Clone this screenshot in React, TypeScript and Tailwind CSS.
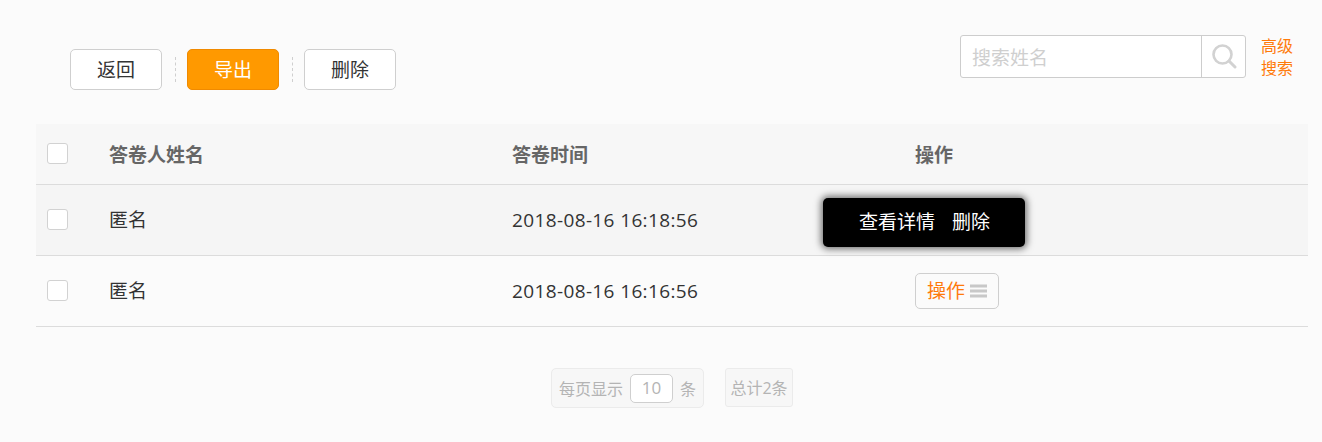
export default function App() {
  const Row = ({ time, open }: { time: string; open: boolean }) => (
    <div className={`flex h-[71px] items-center border-b border-[#dcdcdc] ${open ? "bg-[#f5f5f5]" : ""}`}>
      <span className="mb-[1px] ml-[11px] h-[21px] w-[21px] rounded-[3px] border border-[#d2d2d2] bg-white" />
      <span className="ml-[41px] w-[403px] pb-[1px] text-[19px] text-[#333]">匿名</span>
      <span className="w-[403px] font-['Open_Sans',sans-serif] text-[19px] tracking-[0.37px] text-[#333]">{time}</span>
      {open ? (
        <div className="relative h-full flex-1">
          <div className="absolute left-[-92px] top-[13px] flex h-[49px] w-[202px] items-center rounded-[5px] bg-black pb-[2px] pl-[36px] text-[19px] text-white shadow-[0_0_7px_2px_rgba(0,0,0,0.55)]">
            <span>查看详情</span>
            <span className="ml-[17px]">删除</span>
          </div>
        </div>
      ) : (
        <div className="flex h-[36px] w-[84px] items-center justify-center gap-[5px] rounded-[5px] border border-[#cfcfcf] pb-[1px] text-[19px] text-[#ff7a0a]">
          <span>操作</span>
          <svg width="17" height="14" viewBox="0 0 17 14" className="mt-[1px] fill-[#c8c8c8]">
            <rect x="0" y="0.5" width="17" height="3" />
            <rect x="0" y="5.5" width="17" height="3" />
            <rect x="0" y="10.5" width="17" height="3" />
          </svg>
        </div>
      )}
    </div>
  );

  return (
    <div className="h-[442px] w-[1322px] overflow-hidden bg-[#fbfbfb] pl-[36px] pr-[14px] font-['Noto_Sans_CJK_SC',sans-serif]">
      <div className="flex h-[124px] items-start">
        <div className="ml-[34px] mt-[49px] flex items-center">
          <button className="h-[41px] w-[92px] rounded-[5px] border border-[#cfcfcf] bg-white pb-[1px] text-[19px] text-[#333]">返回</button>
          <span className="ml-[13px] mr-[11px] h-[25px] border-l border-dashed border-[#cfcfcf]" />
          <button className="h-[41px] w-[92px] rounded-[5px] border border-[#f08a00] bg-[#ff9900] pb-[1px] text-[19px] text-white">导出</button>
          <span className="ml-[13px] mr-[11px] h-[25px] border-l border-dashed border-[#cfcfcf]" />
          <button className="h-[41px] w-[92px] rounded-[5px] border border-[#cfcfcf] bg-white pb-[1px] text-[19px] text-[#333]">删除</button>
        </div>
        <div className="ml-auto mr-[14px] mt-[35px] flex items-start">
          <div className="flex h-[43px] w-[286px] rounded-[3px] border border-[#cdcdcd] bg-white">
            <span className="flex-1 pl-[11px] text-[19px] leading-[41px] text-[#cfcfcf]">搜索姓名</span>
            <span className="flex w-[44px] items-center justify-center border-l border-[#cdcdcd]">
              <svg width="26" height="26" viewBox="0 0 26 26" fill="none" stroke="#d2d2d2" className="-mt-[2px]">
                <circle cx="11.5" cy="11.5" r="9" strokeWidth="2.6" />
                <path d="M18 18l6 6" strokeWidth="3" strokeLinecap="round" />
              </svg>
            </span>
          </div>
          <span className="-mt-[1px] ml-[15px] w-[33px] text-[16px] leading-[22px] text-[#ff7a0a]">高级搜索</span>
        </div>
      </div>

      <div className="flex h-[61px] items-center border-b border-[#dcdcdc] bg-[#f7f7f7] text-[19px] font-bold text-[#666]">
        <span className="mb-[1px] ml-[11px] h-[21px] w-[21px] rounded-[3px] border border-[#d2d2d2] bg-white" />
        <span className="ml-[41px] w-[403px] pt-[1px]">答卷人姓名</span>
        <span className="w-[403px] pt-[1px]">答卷时间</span>
        <span className="pt-[1px]">操作</span>
      </div>
      <Row time="2018-08-16 16:18:56" open />
      <Row time="2018-08-16 16:16:56" open={false} />

      <div className="ml-[515px] mt-[41px] flex items-start text-[#b4b4b4]">
        <div className="flex h-[40px] w-[153px] items-center rounded-[5px] border border-[#ebebeb] bg-[#f7f7f7] pl-[7px] text-[16px]">
          <span>每页显示</span>
          <span className="ml-[7px] flex h-[29px] w-[43px] items-center justify-center rounded-[5px] border border-[#cfcfcf] bg-white font-['Open_Sans',sans-serif] text-[17px] text-[#b4b4b4]">10</span>
          <span className="ml-[7px]">条</span>
        </div>
        <div className="ml-[21px] flex h-[39px] w-[68px] items-center justify-center rounded-[3px] border border-[#ebebeb] bg-[#f7f7f7] font-['Open_Sans','Noto_Sans_CJK_SC',sans-serif] text-[16px]">
          <span className="whitespace-nowrap">总计2条</span>
        </div>
      </div>
    </div>
  );
}
